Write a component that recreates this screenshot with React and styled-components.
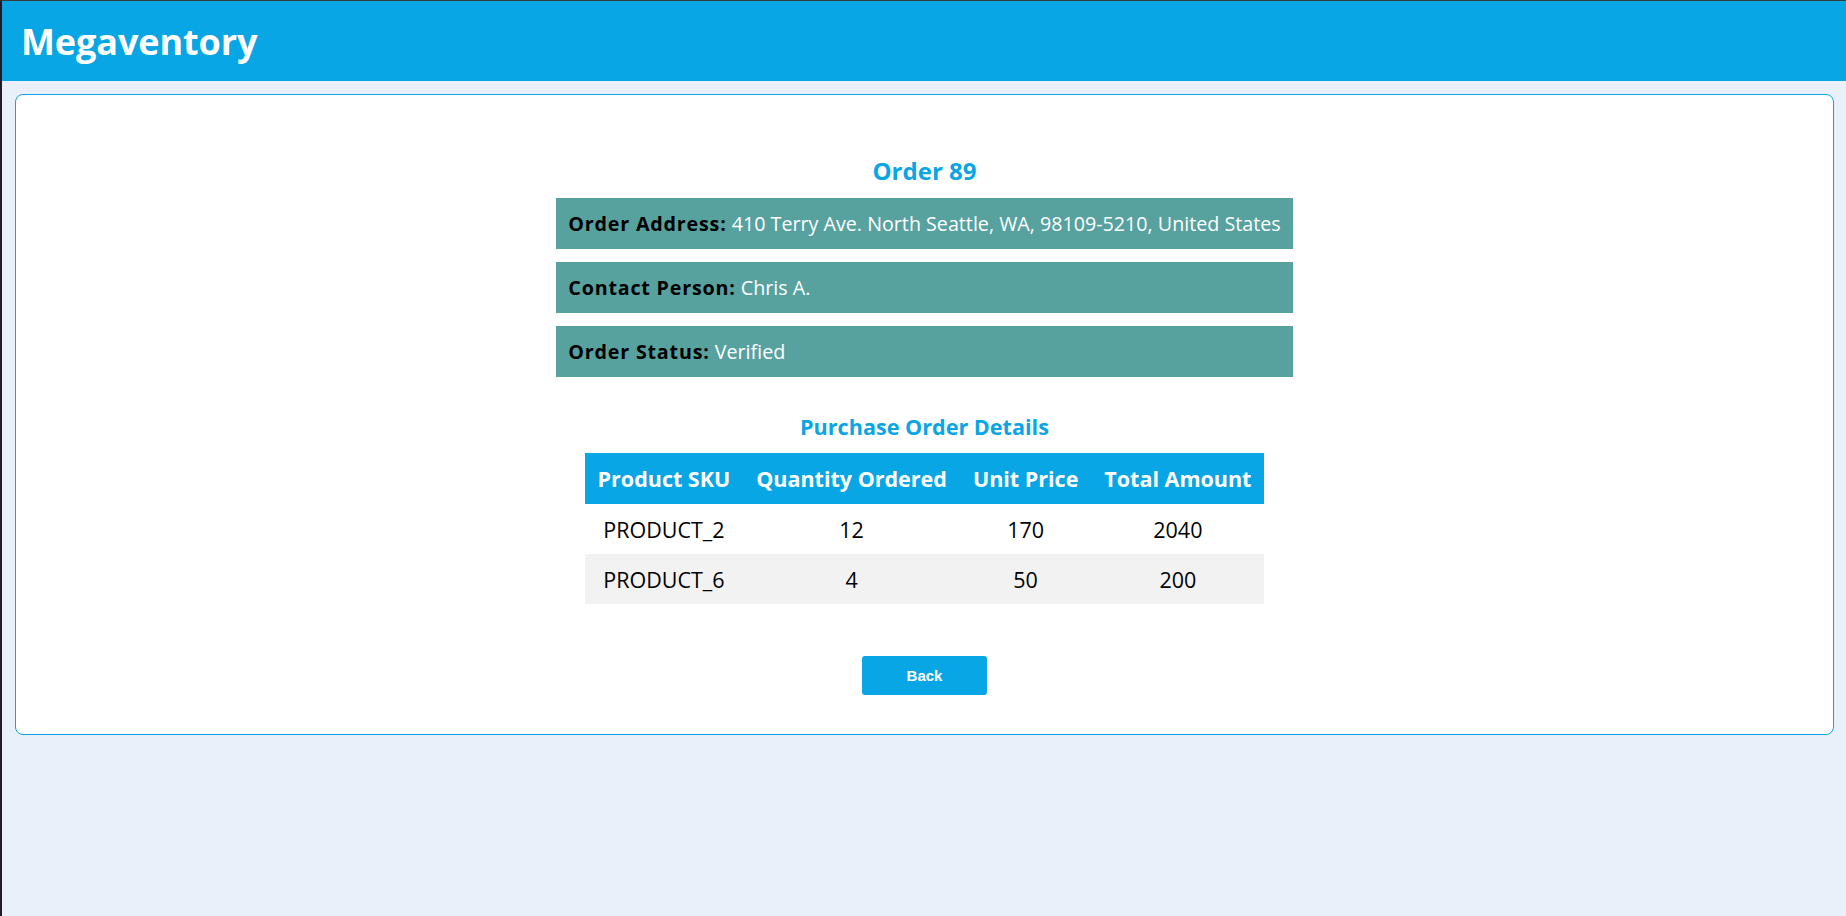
import React from "react";
import styled, { createGlobalStyle } from "styled-components";

const GlobalStyle = createGlobalStyle`
  * {
    box-sizing: border-box;
  }
  body {
    margin: 0;
    font-family: "Open Sans", "Noto Sans", sans-serif;
    background-color: #e9f0f9;
  }
`;

const Page = styled.div`
  min-height: 100vh;
  border-left: 2px solid #201c25;
  border-top: 1px solid #3a3a3a;
  background-color: #e9f0f9;
`;

const Navbar = styled.header`
  height: 80px;
  background-color: #08a6e5;
  display: flex;
  align-items: center;
  padding-left: 19px;
`;

const Brand = styled.h1`
  margin: 0;
  color: #ffffff;
  font-size: 36px;
  font-weight: 700;
  letter-spacing: -0.1px;
`;

const Main = styled.main`
  padding: 13px 12px 13px 13px;
`;

const Card = styled.section`
  background-color: #ffffff;
  border: 1px solid #0aa6e5;
  border-radius: 8px;
  padding: 62px 20px 39px;
  display: flex;
  flex-direction: column;
  align-items: center;
`;

const Title = styled.h2`
  margin: 0 0 13px;
  font-size: 24px;
  line-height: 28px;
  font-weight: 700;
  color: #0aa5e4;
`;

const InfoList = styled.div`
  width: fit-content;
  display: flex;
  flex-direction: column;
  gap: 13px;
`;

const InfoBox = styled.div`
  background-color: #57a19f;
  padding: 13px 12px;
  font-size: 19.7px;
  line-height: 25px;
  color: #ffffff;
  white-space: nowrap;
`;

const InfoLabel = styled.span`
  color: #000000;
  font-weight: 700;
  letter-spacing: 0.8px;
`;

const SubTitle = styled.h3`
  margin: 36px 0 13px;
  font-size: 21.6px;
  line-height: 27px;
  font-weight: 700;
  color: #0aa5e4;
`;

const Table = styled.table`
  border-collapse: collapse;
  font-size: 21.5px;
`;

const HeadCell = styled.th`
  background-color: #08a6e5;
  color: #ffffff;
  font-weight: 700;
  height: 51px;
  padding: 0 13px;
  text-align: center;
  white-space: nowrap;
`;

const Row = styled.tr`
  background-color: ${(p) => (p.$alt ? "#f2f2f2" : "#ffffff")};
`;

const Cell = styled.td`
  height: 50px;
  padding: 0 13px;
  text-align: center;
  color: #000000;
`;

const BackButton = styled.button`
  margin-top: 52px;
  width: 125px;
  height: 39px;
  border: none;
  border-radius: 3px;
  background-color: #08a6e5;
  color: #ffffff;
  font-family: "Liberation Sans", Arial, sans-serif;
  font-size: 15px;
  font-weight: 700;
  cursor: pointer;
`;

const order = {
  id: 89,
  address: "410 Terry Ave. North Seattle, WA, 98109-5210, United States",
  contact: "Chris A.",
  status: "Verified",
  items: [
    { sku: "PRODUCT_2", qty: 12, price: 170, total: 2040 },
    { sku: "PRODUCT_6", qty: 4, price: 50, total: 200 },
  ],
};

const App = () => {
  return (
    <>
      <GlobalStyle />
      <Page>
        <Navbar>
          <Brand>Megaventory</Brand>
        </Navbar>
        <Main>
          <Card>
            <Title>Order {order.id}</Title>
            <InfoList>
              <InfoBox>
                <InfoLabel>Order Address:</InfoLabel> {order.address}
              </InfoBox>
              <InfoBox>
                <InfoLabel>Contact Person:</InfoLabel> {order.contact}
              </InfoBox>
              <InfoBox>
                <InfoLabel>Order Status:</InfoLabel> {order.status}
              </InfoBox>
            </InfoList>

            <SubTitle>Purchase Order Details</SubTitle>
            <Table>
              <thead>
                <tr>
                  <HeadCell>Product SKU</HeadCell>
                  <HeadCell>Quantity Ordered</HeadCell>
                  <HeadCell>Unit Price</HeadCell>
                  <HeadCell>Total Amount</HeadCell>
                </tr>
              </thead>
              <tbody>
                {order.items.map((item, i) => (
                  <Row key={item.sku} $alt={i % 2 === 1}>
                    <Cell>{item.sku}</Cell>
                    <Cell>{item.qty}</Cell>
                    <Cell>{item.price}</Cell>
                    <Cell>{item.total}</Cell>
                  </Row>
                ))}
              </tbody>
            </Table>

            <BackButton>Back</BackButton>
          </Card>
        </Main>
      </Page>
    </>
  );
};

export default App;
